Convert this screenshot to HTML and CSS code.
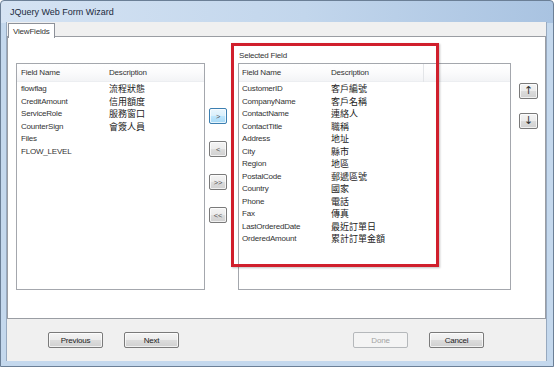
FILE: index.html
```html
<!DOCTYPE html>
<html lang="en">
<head>
    <meta charset="UTF-8">
    <title>JQuery Web Form Wizard</title>
    <link rel="stylesheet" href="styles.css">
</head>
<body>
    <div class="window">
        <div class="titlebar">JQuery Web Form Wizard</div>
        <div class="client">
            <div class="tabs">
                <div class="tab">ViewFields</div>
            </div>

            <div class="tabpage">
                <div class="listview left-list">
                    <div class="lv-header">
                        <span class="col-name">Field Name</span>
                        <span class="col-desc">Description</span>
                    </div>
                    <div class="lv-row"><span class="col-name">flowflag</span><span class="col-desc">流程狀態</span></div>
                    <div class="lv-row"><span class="col-name">CreditAmount</span><span class="col-desc">信用額度</span></div>
                    <div class="lv-row"><span class="col-name">ServiceRole</span><span class="col-desc">服務窗口</span></div>
                    <div class="lv-row"><span class="col-name">CounterSign</span><span class="col-desc">會簽人員</span></div>
                    <div class="lv-row"><span class="col-name">Files</span><span class="col-desc"></span></div>
                    <div class="lv-row"><span class="col-name">FLOW_LEVEL</span><span class="col-desc"></span></div>
                </div>

                <div class="move-buttons">
                    <button class="btn small focused">&gt;</button>
                    <button class="btn small">&lt;</button>
                    <button class="btn small">&gt;&gt;</button>
                    <button class="btn small">&lt;&lt;</button>
                </div>

                <div class="selected">
                    <div class="group-label">Selected Field</div>
                    <div class="listview right-list">
                        <div class="lv-header">
                            <span class="col-name">Field Name</span>
                            <span class="col-desc">Description</span>
                        </div>
                        <div class="lv-row"><span class="col-name">CustomerID</span><span class="col-desc">客戶編號</span></div>
                        <div class="lv-row"><span class="col-name">CompanyName</span><span class="col-desc">客戶名稱</span></div>
                        <div class="lv-row"><span class="col-name">ContactName</span><span class="col-desc">連絡人</span></div>
                        <div class="lv-row"><span class="col-name">ContactTitle</span><span class="col-desc">職稱</span></div>
                        <div class="lv-row"><span class="col-name">Address</span><span class="col-desc">地址</span></div>
                        <div class="lv-row"><span class="col-name">City</span><span class="col-desc">縣市</span></div>
                        <div class="lv-row"><span class="col-name">Region</span><span class="col-desc">地區</span></div>
                        <div class="lv-row"><span class="col-name">PostalCode</span><span class="col-desc">郵遞區號</span></div>
                        <div class="lv-row"><span class="col-name">Country</span><span class="col-desc">國家</span></div>
                        <div class="lv-row"><span class="col-name">Phone</span><span class="col-desc">電話</span></div>
                        <div class="lv-row"><span class="col-name">Fax</span><span class="col-desc">傳真</span></div>
                        <div class="lv-row"><span class="col-name">LastOrderedDate</span><span class="col-desc">最近訂單日</span></div>
                        <div class="lv-row"><span class="col-name">OrderedAmount</span><span class="col-desc">累計訂單金額</span></div>
                    </div>
                </div>

                <div class="order-buttons">
                    <button class="btn arrow">&#8593;</button>
                    <button class="btn arrow">&#8595;</button>
                </div>
            </div>

            <div class="footer">
                <button class="btn wide">Previous</button>
                <button class="btn wide">Next</button>
                <div class="spacer"></div>
                <button class="btn wide" disabled>Done</button>
                <button class="btn wide">Cancel</button>
            </div>
        </div>
    </div>

    <div class="highlight"></div>
</body>
</html>
```

FILE: styles.css
```css
* {
    margin: 0;
    padding: 0;
    box-sizing: border-box;
}

body {
    width: 554px;
    height: 367px;
    overflow: hidden;
    position: relative;
    font-family: "Liberation Sans", "Noto Sans CJK TC", sans-serif;
    font-size: 8px;
    letter-spacing: -0.2px;
    color: #333;
    background: #ffffff;
}

.window {
    width: 554px;
    height: 367px;
    border: 1px solid #6b7f96;
    border-radius: 4px 4px 0 0;
    padding: 0 6px 5px 5px;
    background:
        linear-gradient(to right, #d5e3f3, #c2d6ec 55%, #a9c3e1) top / 100% 22px no-repeat,
        #c4d8ed;
    display: flex;
    flex-direction: column;
}

.titlebar {
    height: 21px;
    padding: 6px 0 0 4px;
    font-size: 9px;
    letter-spacing: 0;
    color: #1b2a3c;
}

.client {
    flex: 1;
    display: flex;
    flex-direction: column;
    background: #f0f0f0;
    border-left: 1px solid #97a9bf;
    border-right: 1px solid #97a9bf;
}

.tabs {
    height: 14px;
    display: flex;
    padding-left: 1px;
}

.tab {
    height: 15px;
    padding: 3px 4px 0 4px;
    width: 47px;
    background: #ffffff;
    border: 1px solid #8d9199;
    border-bottom: none;
    margin-top: 1px;
    position: relative;
    z-index: 1;
}

.tabpage {
    height: 283px;
    background: #ffffff;
    border: 1px solid #9a9da3;
    display: flex;
    align-items: flex-start;
    padding-top: 13px;
}

.listview {
    height: 227px;
    border: 1px solid #a4a7ad;
    background: #ffffff;
}

.left-list {
    width: 189px;
    margin-left: 8px;
    margin-top: 13px;
}

.right-list {
    width: 273px;
}

.lv-header {
    height: 18px;
    display: flex;
    align-items: center;
    background: linear-gradient(#ffffff, #fbfbfc 50%, #f3f4f6);
    border-bottom: 1px solid #eceef1;
    margin-bottom: 1px;
}

.lv-row {
    height: 12.5px;
    line-height: 12.5px;
    display: flex;
}

.left-list .col-name {
    width: 92px;
    padding-left: 4px;
}

.right-list .col-name {
    width: 92px;
    padding-left: 3px;
}

.col-desc {
    font-family: "Noto Sans CJK TC", "Liberation Sans", sans-serif;
    font-size: 9px;
    letter-spacing: 0;
    color: #222;
}

.lv-header .col-desc {
    font-family: "Liberation Sans", sans-serif;
    font-size: 8px;
    letter-spacing: -0.2px;
    color: #333;
}

.right-list .lv-header .col-desc {
    width: 93px;
    height: 18px;
    line-height: 18px;
    border-right: 1px solid #e3e5e8;
}

.left-list .lv-header .col-name,
.right-list .lv-header .col-name {
    height: 18px;
    line-height: 18px;
}

.move-buttons {
    display: flex;
    flex-direction: column;
    gap: 17px;
    margin-left: 4px;
    margin-top: 58px;
}

.selected {
    margin-left: 11px;
}

.group-label {
    height: 13px;
    line-height: 12px;
    padding-left: 1px;
}

.order-buttons {
    display: flex;
    flex-direction: column;
    gap: 14px;
    margin-left: 8px;
    margin-top: 33px;
}

.btn {
    font-family: "Liberation Sans", sans-serif;
    font-size: 8px;
    letter-spacing: -0.2px;
    color: #222;
    border: 1px solid #7a7a7a;
    border-radius: 2px;
    background: linear-gradient(#f4f4f4, #ececec 48%, #dcdcdc 52%, #d0d0d0);
    box-shadow: inset 0 0 0 1px rgba(255, 255, 255, 0.7);
}

.btn.small {
    width: 18px;
    height: 16px;
    font-size: 7.5px;
    color: #555;
}

.btn.focused {
    border-color: #3c7fb1;
    background: linear-gradient(#eaf6fd, #d9f0fc 48%, #bee6fd 52%, #a7d9f5);
}

.btn.arrow {
    width: 19px;
    height: 16px;
    font-family: "DejaVu Sans", sans-serif;
    font-size: 11px;
    line-height: 12px;
    color: #333;
}

.footer {
    flex: 1;
    display: flex;
    align-items: flex-start;
    padding-top: 13px;
    padding-left: 41px;
    padding-right: 62px;
}

.btn.wide {
    width: 55px;
    height: 16px;
}

.footer .btn.wide + .btn.wide {
    margin-left: 21px;
}

.footer .spacer {
    flex: 1;
}

.footer .spacer + .btn.wide {
    margin-left: 0;
}

.footer .btn.wide:last-child {
    margin-left: 14px;
}

.btn:disabled {
    color: #a3a3a3;
    border-color: #b5b8bb;
    background: #f4f4f4;
    box-shadow: none;
}

.highlight {
    position: absolute;
    left: 231px;
    top: 43px;
    width: 208px;
    height: 224px;
    border: 3px solid #d01f2c;
    box-shadow: 1px 1px 2px rgba(0, 0, 0, 0.25);
}
```
